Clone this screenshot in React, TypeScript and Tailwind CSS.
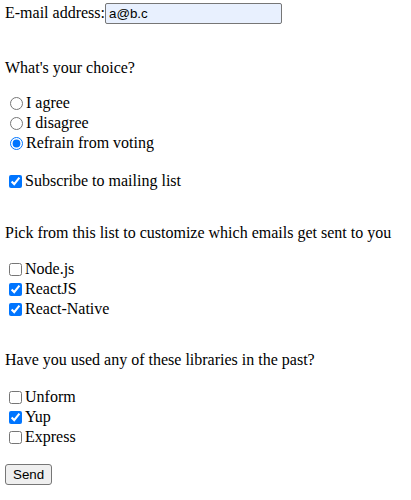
import { useState } from "react";

/* ─── Data ───────────────────────────────────────────────── */

const CHOICES = ["I agree", "I disagree", "Refrain from voting"];

const TOPICS = [
  { name: "Node.js", checked: false },
  { name: "ReactJS", checked: true },
  { name: "React-Native", checked: true },
];

const LIBS = [
  { name: "Unform", checked: false },
  { name: "Yup", checked: true },
  { name: "Express", checked: false },
];

/* ─── Pieces ─────────────────────────────────────────────── */

function CheckRow({ label, defaultChecked }: { label: string; defaultChecked: boolean }) {
  return (
    <label className="flex items-center h-[20px]">
      <input
        type="checkbox"
        defaultChecked={defaultChecked}
        className="w-[13px] h-[13px] ml-[4px] mr-[3px] accent-[#0075ff]"
      />
      <span>{label}</span>
    </label>
  );
}

export default function App() {
  const [choice, setChoice] = useState(CHOICES[2]);
  const [email, setEmail] = useState("a@b.c");

  return (
    <form
      className="flex flex-col items-start px-[5px] pt-[3px] text-[16px] text-black bg-white min-h-[500px]"
      style={{ fontFamily: '"Liberation Serif", "Times New Roman", serif' }}
      onSubmit={(e) => e.preventDefault()}
    >
      <label className="flex items-center h-[20px]">
        <span>E-mail address:</span>
        <input
          type="text"
          value={email}
          onChange={(e) => setEmail(e.target.value)}
          className="w-[177px] h-[21px] px-[3px] border border-[#767676] rounded-[2px] bg-[#e8f0fe] text-[13.33px] outline-none"
          style={{ fontFamily: '"Liberation Sans", Arial, sans-serif' }}
        />
      </label>

      <p className="mt-[35px] h-[20px] flex items-center">What's your choice?</p>

      <div className="mt-[15px] flex flex-col">
        {CHOICES.map((c) => (
          <label key={c} className="flex items-center h-[20px]">
            <input
              type="radio"
              name="choice"
              checked={choice === c}
              onChange={() => setChoice(c)}
              className="w-[13px] h-[13px] ml-[5px] mr-[3px] accent-[#0075ff]"
            />
            <span>{c}</span>
          </label>
        ))}
      </div>

      <div className="mt-[18px]">
        <CheckRow label="Subscribe to mailing list" defaultChecked />
      </div>

      <p className="mt-[32px] h-[20px] flex items-center">
        Pick from this list to customize which emails get sent to you
      </p>

      <div className="mt-[16px] flex flex-col">
        {TOPICS.map((t) => (
          <CheckRow key={t.name} label={t.name} defaultChecked={t.checked} />
        ))}
      </div>

      <p className="mt-[31px] h-[20px] flex items-center">
        Have you used any of these libraries in the past?
      </p>

      <div className="mt-[17px] flex flex-col">
        {LIBS.map((l) => (
          <CheckRow key={l.name} label={l.name} defaultChecked={l.checked} />
        ))}
      </div>

      <button
        type="submit"
        className="mt-[17px] h-[21px] px-[7px] border border-[#767676] rounded-[3px] bg-[#efefef] text-[13.33px] leading-none"
        style={{ fontFamily: '"Liberation Sans", Arial, sans-serif' }}
      >
        Send
      </button>
    </form>
  );
}
